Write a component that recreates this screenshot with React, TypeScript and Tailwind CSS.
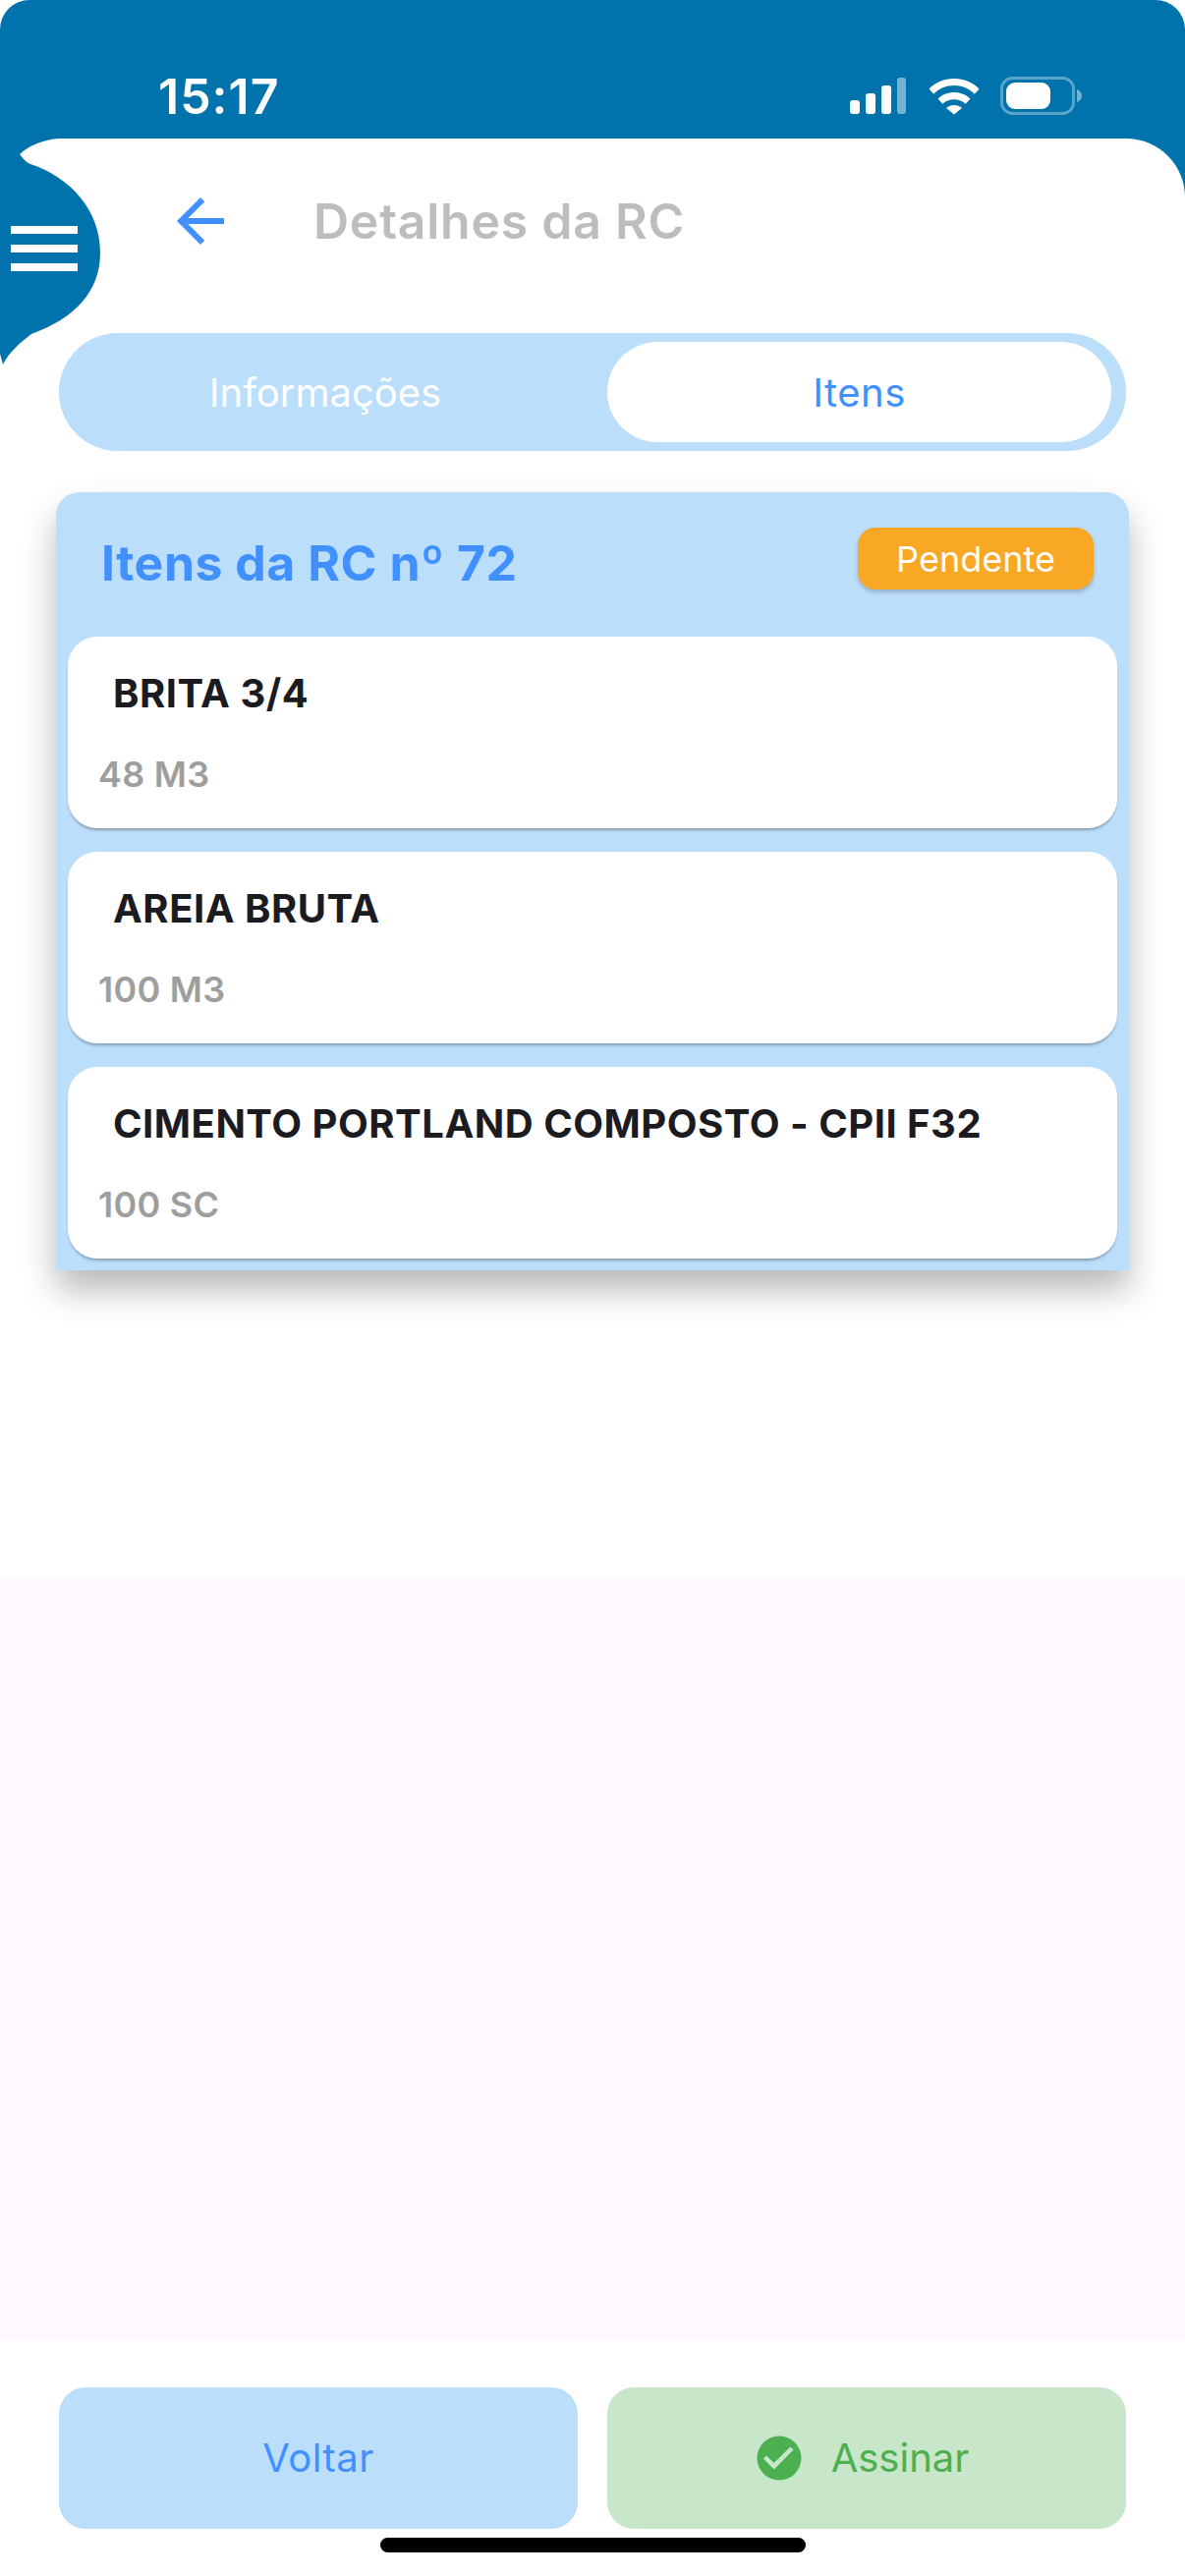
const items = [
  { name: "BRITA 3/4", qty: "48 M3" },
  { name: "AREIA BRUTA", qty: "100 M3" },
  { name: "CIMENTO PORTLAND COMPOSTO - CPII F32", qty: "100 SC" },
];

function StatusIcons() {
  return (
    <div className="flex items-start">
      <svg width="60" height="38" viewBox="0 0 60 38" className="mt-[1px]">
        <rect x="0" y="23" width="10" height="14" rx="3" fill="#fff" />
        <rect x="16" y="16" width="10" height="21" rx="3" fill="#fff" />
        <rect x="32" y="8" width="10" height="29" rx="3" fill="#fff" />
        <rect x="48" y="0" width="9" height="37" rx="3" fill="#fff" fillOpacity="0.45" />
      </svg>
      <svg width="52" height="38" viewBox="0 0 52 38" className="ml-[20px] mt-[1px]">
        <path
          d="M0.5 11.5C7 4.8 16 1 26 1s19 3.8 25.5 10.5l-4.7 5.2C41.500 11.200 34.100 8 26 8S10.500 11.200 5.200 16.700z"
          fill="#fff"
        />
        <path
          d="M9.500 21.500C13.800 17.300 19.600 15 26 15s12.200 2.300 16.500 6.500l-4.800 5.200C34.700 23.900 30.600 22.200 26 22.200s-8.700 1.700-11.700 4.500z"
          fill="#fff"
        />
        <path d="M18 31c2.100-1.900 4.900-3 8-3s5.900 1.100 8 3l-8 6.500z" fill="#fff" />
      </svg>
      <svg width="84" height="40" viewBox="0 0 84 40" className="ml-[21px]">
        <rect x="1.500" y="1.500" width="73" height="36" rx="11" fill="none" stroke="#fff" strokeOpacity="0.35" strokeWidth="3" />
        <rect x="6" y="6" width="45" height="27" rx="9" fill="#fff" />
        <path d="M78 13c3 1 5 3.500 5 6.500S81 25 78 26z" fill="#fff" fillOpacity="0.45" />
      </svg>
    </div>
  );
}

function MenuBlob() {
  return (
    <div className="absolute left-0 top-[141px] h-[230px] w-[102px]">
      <svg width="102" height="230" viewBox="0 0 102 230" className="absolute inset-0">
        <path
          d="M0 0H60C44 1 30 7 20 16L25 22Q28 25 31 26C73 40 102 74 102 116C102 156 76 183 32 199C20 208 9 218 3 230L0 219Z"
          fill="#0073ad"
        />
      </svg>
      <div className="absolute left-[11px] top-[89px] flex w-[68px] flex-col gap-[11px]">
        <div className="h-[8px] bg-white" />
        <div className="h-[8px] bg-white" />
        <div className="h-[8px] bg-white" />
      </div>
    </div>
  );
}

function BackArrow() {
  return (
    <svg width="48" height="48" viewBox="4 4 16 16" fill="#4290ff">
      <path d="M20 11H7.830l5.590-5.590L12 4l-8 8 8 8 1.410-1.410L7.830 13H20v-2z" />
    </svg>
  );
}

function CheckBadge() {
  return (
    <svg width="46" height="46" viewBox="0 0 46 46">
      <circle cx="23" cy="23" r="22.500" fill="#4caf50" />
      <path d="M8.500 22l9.200 9.200L36 13" fill="none" stroke="#c8e6c9" strokeWidth="4.500" />
    </svg>
  );
}

export default function App() {
  return (
    <div className="relative flex h-[2622px] w-[1206px] flex-col bg-white font-['Inter',sans-serif]">
      <div className="flex h-full flex-col rounded-t-[30px] bg-[#0073ad]">
        <div className="flex h-[141px] shrink-0 items-start justify-between pl-[161px] pr-[104px] pt-[78px]">
          <span className="text-[50px] font-semibold leading-[40px] tracking-[1px] text-white">15:17</span>
          <StatusIcons />
        </div>

        <div className="flex flex-1 flex-col rounded-tr-[60px] bg-white pt-[60px]">
          <div className="flex h-[48px] items-center pl-[180px]">
            <BackArrow />
            <h1 className="ml-[91px] text-[50px] font-semibold leading-none tracking-[0.75px] text-[#bdbdbd]">Detalhes da RC</h1>
          </div>

          <div className="mx-[60px] mt-[90px] flex h-[120px] rounded-full bg-[#bbdefb] py-[9px] pr-[15px]">
            <button className="flex-1 pr-[16px] pt-[2px] text-[40px] text-white">Informações</button>
            <button className="w-[513px] rounded-full bg-white pt-[2px] text-[40px] tracking-[0.5px] text-[#4290ff]">Itens</button>
          </div>

          <div className="mx-[57px] mt-[42px] rounded-t-[24px] bg-[#bbdefb] px-[12px] pb-[12px] shadow-[0_20px_34px_rgba(0,0,0,0.28)]">
            <div className="flex h-[147px] items-start justify-between pl-[34px] pr-[24px] pt-[36px]">
              <h2 className="mt-[10px] text-[50px] font-bold leading-[52px] tracking-[0.5px] text-[#4290ff]">Itens da RC nº 72</h2>
              <span className="flex h-[63px] w-[240px] items-center justify-center rounded-[18px] bg-[#f9a825] text-[36px] text-white shadow-[0_3px_4px_rgba(0,0,0,0.2)]">
                Pendente
              </span>
            </div>
            <div className="flex flex-col gap-[24px]">
              {items.map((item) => (
                <div
                  key={item.name}
                  className="flex h-[195px] flex-col rounded-[30px] bg-white pl-[31px] pt-[35px] shadow-[0_3px_3px_-1px_rgba(0,0,0,0.3)]"
                >
                  <p className="pl-[15px] text-[40px] font-bold leading-[46px] tracking-[0.5px] text-[#1c1b1f]">{item.name}</p>
                  <p className="mt-[36px] text-[36px] font-semibold leading-[46px] tracking-[0.25px] text-[#9e9e9e]">{item.qty}</p>
                </div>
              ))}
            </div>
          </div>

          <div className="mt-[312px] h-[777px] bg-[#fef9ff]" />

          <div className="mt-[48px] flex gap-[30px] px-[60px]">
            <button className="h-[144px] w-[528px] rounded-[27px] bg-[#bbdefb] text-[40px] tracking-[0.5px] text-[#4290ff]">Voltar</button>
            <button className="flex h-[144px] w-[528px] items-center justify-center gap-[30px] rounded-[27px] bg-[#c8e6c9] pr-[8px] text-[40px] text-[#4caf50]">
              <CheckBadge />
              Assinar
            </button>
          </div>
          <div className="mx-auto mt-[9px] h-[15px] w-[433px] rounded-full bg-black" />
        </div>
      </div>
      <MenuBlob />
    </div>
  );
}
